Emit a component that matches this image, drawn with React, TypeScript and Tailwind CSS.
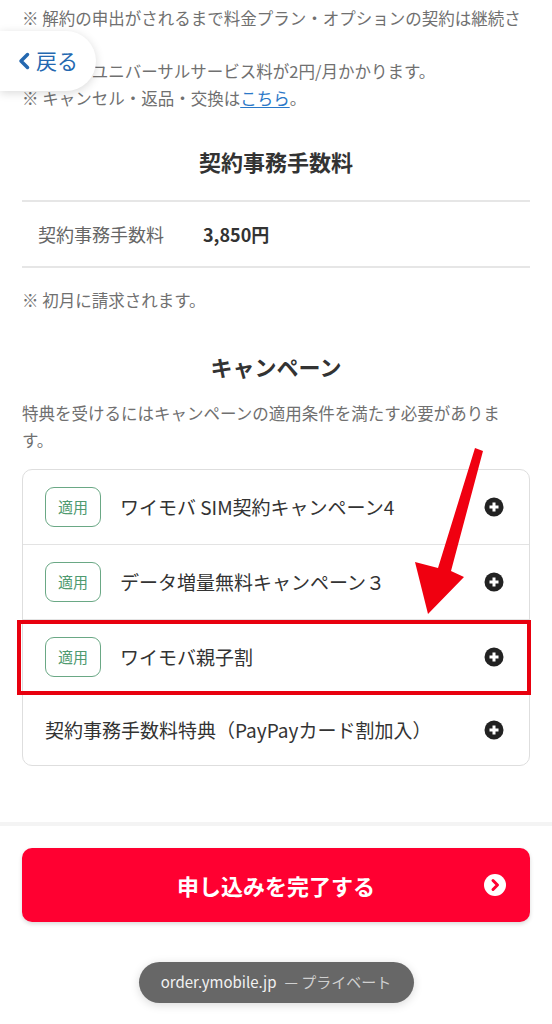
import React from "react";

function PlusIcon() {
  return (
    <svg width="20" height="20" viewBox="0 0 20 20">
      <circle cx="10" cy="10" r="9.5" fill="#222" />
      <path d="M10 5.5v9M5.5 10h9" stroke="#fff" strokeWidth="3" strokeLinecap="butt" />
    </svg>
  );
}

function Badge() {
  return (
    <span className="flex h-[40px] w-[56px] shrink-0 items-center justify-center rounded-[9px] border border-[#6aa885] text-[15px] text-[#4f9a70]">
      適用
    </span>
  );
}

function Row({ badge, text, last }: { badge?: boolean; text: string; last?: boolean }) {
  return (
    <div
      className={
        "flex items-center justify-between py-[17px] pl-[22px] pr-[25px] " +
        (last ? "" : "border-b border-[#e3e3e3]")
      }
    >
      <div className="flex items-center gap-[19px]">
        {badge && <Badge />}
        <span className={"text-[19px] text-[#333] " + (badge ? "leading-[40px]" : "leading-[36px]")}>{text}</span>
      </div>
      <PlusIcon />
    </div>
  );
}

export default function App() {
  return (
    <div
      className="relative h-[1024px] w-[552px] overflow-hidden bg-white"
      style={{ fontFamily: '"Noto Sans CJK JP", "Noto Sans", sans-serif' }}
    >
      <div className="px-[22px]">
        <div className="pt-[5px] text-[16.5px] leading-[26.5px] text-[#707070]">
          <p>※ 解約の申出がされるまで料金プラン・オプションの契約は継続さ</p>
          <p>れます。</p>
          <p>※ 別途、ユニバーサルサービス料が2円/月かかります。</p>
          <p>
            ※ キャンセル・返品・交換は
            <span className="text-[#2a78c8] underline underline-offset-2">こちら</span>。
          </p>
        </div>

        <h2 className="mt-[35px] text-center text-[22px] font-bold leading-[30px] text-[#333]">契約事務手数料</h2>

        <div className="mt-[24px] flex h-[68px] items-center border-y-2 border-[#e6e6e6] pl-[16px]">
          <span className="w-[165px] text-[18px] text-[#666]">契約事務手数料</span>
          <span className="text-[18px] font-bold text-[#333]">3,850円</span>
        </div>

        <p className="mt-[19px] text-[16.5px] leading-[26px] text-[#707070]">※ 初月に請求されます。</p>

        <h2 className="mt-[38px] text-center text-[22px] font-bold leading-[30px] text-[#333]">キャンペーン</h2>

        <p className="mt-[19px] text-[16.5px] leading-[27px] text-[#707070]">
          特典を受けるにはキャンペーンの適用条件を満たす必要があります。
        </p>

        <div className="mt-[15px] rounded-[10px] border border-[#dedede]">
          <Row badge text="ワイモバ SIM契約キャンペーン4" />
          <Row badge text="データ増量無料キャンペーン３" />
          <Row badge text="ワイモバ親子割" />
          <Row text="契約事務手数料特典（PayPayカード割加入）" last />
        </div>
      </div>

      <div className="mt-[56px] border-t-4 border-[#f4f4f4] px-[22px] pt-[22px]">
        <button className="relative flex h-[74px] w-full items-center justify-center rounded-[10px] bg-[#ff0031] shadow-[0_2px_4px_rgba(0,0,0,0.15)]">
          <span className="text-[22px] font-bold text-white">申し込みを完了する</span>
          <span className="absolute right-[24px] top-1/2 -translate-y-1/2">
            <svg width="22" height="22" viewBox="0 0 22 22">
              <circle cx="11" cy="11" r="11" fill="#fff" />
              <path d="M9 6.5l4.5 4.5L9 15.5" stroke="#ff0031" strokeWidth="3" fill="none" strokeLinecap="round" strokeLinejoin="round" />
            </svg>
          </span>
        </button>
        <div className="mt-[40px] flex justify-center">
          <div className="flex h-[41px] w-[275px] items-center justify-center rounded-full bg-[#676767] text-[15px] shadow-[0_2px_10px_rgba(0,0,0,0.15)]">
            <span className="text-[#f2f2f2]">order.ymobile.jp</span>
            <span className="ml-[8px] text-[#d0d0d0]">— プライベート</span>
          </div>
        </div>
      </div>

      {/* back button overlay */}
      <div className="absolute left-0 top-[31px] flex h-[60px] w-[96px] items-center rounded-r-full bg-white pl-[17px] shadow-[0_2px_10px_rgba(0,0,0,0.15)]">
        <svg width="14" height="20" viewBox="0 0 14 20" className="mr-[5px]">
          <path d="M10.5 3.5L4 10l6.5 6.5" stroke="#2468b0" strokeWidth="3.5" fill="none" strokeLinecap="round" strokeLinejoin="round" />
        </svg>
        <span className="text-[21px] text-[#2468b0]">戻る</span>
      </div>

      {/* red annotation box */}
      <div className="absolute left-[17px] top-[620px] h-[75px] w-[514px] border-[4px] border-[#e8000e]" />

      {/* red arrow */}
      <svg className="absolute left-0 top-0" width="552" height="1024" viewBox="0 0 552 1024">
        <polygon
          points="475,448 483,451 451,571 464,577 428,614 415,562 438,568"
          fill="#f00010"
          strokeLinejoin="round"
        />
      </svg>
    </div>
  );
}
